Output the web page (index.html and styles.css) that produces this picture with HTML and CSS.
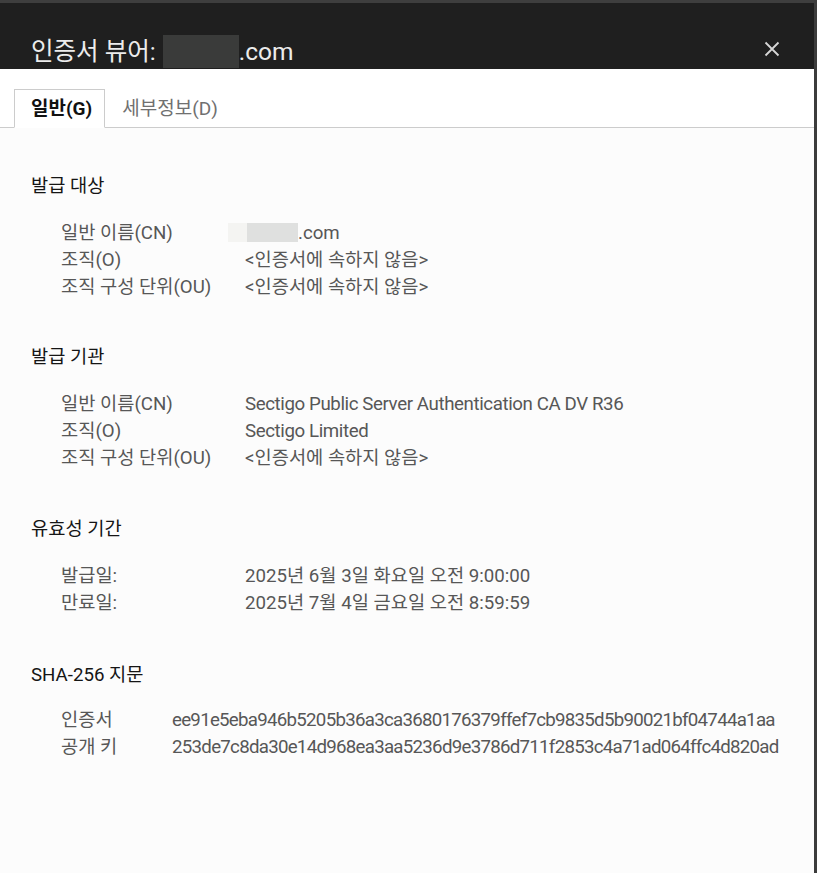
FILE: index.html
```html
<!doctype html>
<html>
	<head>
		<title>인증서 뷰어</title>
		<link rel="stylesheet" href="styles.css">
	</head>
	<body>
		<div class="viewer">
			<div class="titleBar">
				<div class="titleText">인증서 뷰어: <span class="blurTitle"></span>.com</div>
				<svg class="btnClose" width="16" height="16" viewBox="0 0 16 16">
					<path d="M1.5 1.5 L14.5 14.5 M14.5 1.5 L1.5 14.5" stroke="#d6d6d6" stroke-width="1.8" fill="none" />
				</svg>
			</div>
			<div class="tabBar">
				<div class="tab tabActive">일반(G)</div>
				<div class="tab">세부정보(D)</div>
			</div>
			<div class="content">
				<div class="section sectionFirst">
					<div class="sectionHeader">발급 대상</div>
					<div class="row"><div class="label">일반 이름(CN)</div><div class="value"><span class="blurValue"><span class="blurInner"></span></span>.com</div></div>
					<div class="row"><div class="label">조직(O)</div><div class="value">&lt;인증서에 속하지 않음&gt;</div></div>
					<div class="row"><div class="label">조직 구성 단위(OU)</div><div class="value">&lt;인증서에 속하지 않음&gt;</div></div>
				</div>
				<div class="section sectionSecond">
					<div class="sectionHeader">발급 기관</div>
					<div class="row"><div class="label">일반 이름(CN)</div><div class="value latin">Sectigo Public Server Authentication CA DV R36</div></div>
					<div class="row"><div class="label">조직(O)</div><div class="value latin">Sectigo Limited</div></div>
					<div class="row"><div class="label">조직 구성 단위(OU)</div><div class="value">&lt;인증서에 속하지 않음&gt;</div></div>
				</div>
				<div class="section sectionThird">
					<div class="sectionHeader">유효성 기간</div>
					<div class="row"><div class="label">발급일:</div><div class="value">2025년 6월 3일 화요일 오전 9:00:00</div></div>
					<div class="row"><div class="label">만료일:</div><div class="value">2025년 7월 4일 금요일 오전 8:59:59</div></div>
				</div>
				<div class="section">
					<div class="sectionHeader headerLast">SHA-256 지문</div>
					<div class="row"><div class="label labelShort">인증서</div><div class="value hash">ee91e5eba946b5205b36a3ca3680176379ffef7cb9835d5b90021bf04744a1aa</div></div>
					<div class="row"><div class="label labelShort">공개 키</div><div class="value hash">253de7c8da30e14d968ea3aa5236d9e3786d711f2853c4a71ad064ffc4d820ad</div></div>
				</div>
			</div>
		</div>
	</body>
</html>
```

FILE: styles.css
```css
html, body {
	margin: 0;
	height: 100%;
	background: #fcfcfc;
	font-family: Roboto, "Noto Sans CJK KR", sans-serif;
}

.viewer {
	height: 100%;
	border-right: 3px solid #3c3c3c;
	box-sizing: border-box;
	display: flex;
	flex-direction: column;
}

.titleBar {
	height: 66px;
	border-top: 3px solid #3e3e3e;
	background: #1f1f1f;
	display: flex;
	align-items: flex-end;
	justify-content: space-between;
	padding: 0 34px 0 31px;
}

.titleText {
	color: #ececec;
	font-size: 24.5px;
	line-height: 35px;
	display: flex;
	align-items: center;
}

.blurTitle {
	display: inline-block;
	width: 76px;
	height: 33px;
	margin-left: 7px;
	background: #3a3b3a;
}

.btnClose {
	margin-bottom: 12px;
}

.tabBar {
	height: 59px;
	background: #ffffff;
	border-bottom: 1px solid #cccccc;
	display: flex;
	align-items: flex-end;
	padding-left: 14px;
	box-sizing: border-box;
}

.tab {
	height: 38px;
	line-height: 38px;
	font-size: 19px;
	color: #707070;
	padding: 0 17px;
	margin-bottom: -1px;
	box-sizing: border-box;
}

.tabActive {
	height: 39px;
	font-weight: bold;
	color: #111111;
	background: #ffffff;
	border: 1px solid #cccccc;
	border-bottom-color: #ffffff;
	padding: 0 12px 0 16px;
}

.content {
	flex: 1;
	padding: 45px 0 0 31px;
}

.section {
	margin-bottom: 42px;
}

.sectionFirst {
	margin-bottom: 43px;
}

.sectionSecond {
	margin-bottom: 44px;
}

.sectionThird {
	margin-bottom: 45px;
}

.sectionHeader {
	font-size: 18.7px;
	line-height: 27px;
	color: #151515;
	margin-bottom: 20px;
}

.headerLast {
	margin-bottom: 18px;
}

.row {
	display: flex;
	font-size: 18.7px;
	line-height: 27px;
	color: #575757;
}

.label {
	width: 214px;
	padding-left: 30px;
	box-sizing: border-box;
	flex-shrink: 0;
}

.labelShort {
	width: 141px;
}

.latin {
	letter-spacing: -0.4px;
}

.hash {
	letter-spacing: -0.73px;
	white-space: nowrap;
}

.blurValue {
	display: inline-block;
	width: 70px;
	height: 19px;
	vertical-align: -3px;
	margin-left: -17px;
	background: #f4f4f2;
}

.blurInner {
	display: block;
	width: 51px;
	height: 19px;
	margin-left: 19px;
	background: #dfe0df;
}
```
